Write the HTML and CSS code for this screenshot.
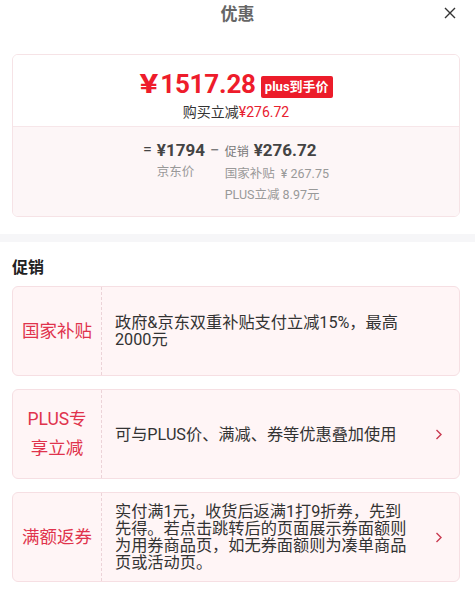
FILE: index.html
```html
<!DOCTYPE html>
<html lang="zh-CN">
<head>
  <meta charset="UTF-8" />
  <meta name="viewport" content="width=device-width, initial-scale=1.0"/>
  <title>优惠</title>
  <link rel="stylesheet" href="styles.css">
</head>
<body>

  <div class="header">
    <h1>优惠</h1>
    <span class="close">
      <svg width="12" height="12" viewBox="0 0 12 12"><path d="M1 1L11 11M11 1L1 11" stroke="#333" stroke-width="1.4" fill="none"/></svg>
    </span>
  </div>

  <div class="price-card">
    <div class="price-top">
      <div class="price-line">
        <span class="big-price"><span class="yen">¥</span>1517.28</span>
        <span class="badge">plus到手价</span>
      </div>
      <div class="saving">购买立减<span class="red">¥276.72</span></div>
    </div>

    <div class="price-bottom">
      <span class="op">=</span>
      <div class="calc-col">
        <div class="calc-main"><span class="num">¥1794</span></div>
        <div class="calc-sub">京东价</div>
      </div>
      <span class="op minus">−</span>
      <div class="calc-col">
        <div class="calc-main"><span class="tag">促销</span><span class="num">¥276.72</span></div>
        <div class="calc-sub">国家补贴 &nbsp;¥ 267.75</div>
        <div class="calc-sub">PLUS立减 8.97元</div>
      </div>
    </div>
  </div>

  <div class="divider"></div>

  <h2 class="section-title">促销</h2>

  <div class="promo-list">
    <div class="promo">
      <div class="promo-label">国家补贴</div>
      <div class="promo-text">政府&amp;京东双重补贴支付立减15%，最高2000元</div>
      <div class="promo-arrow"></div>
    </div>

    <div class="promo">
      <div class="promo-label">PLUS专享立减</div>
      <div class="promo-text">可与PLUS价、满减、券等优惠叠加使用</div>
      <div class="promo-arrow">
        <svg width="8" height="11" viewBox="0 0 8 11"><path d="M1.5 1L6 5.5L1.5 10" stroke="#c93a50" stroke-width="1.4" fill="none"/></svg>
      </div>
    </div>

    <div class="promo">
      <div class="promo-label">满额返券</div>
      <div class="promo-text">实付满1元，收货后返满1打9折券，先到先得。若点击跳转后的页面展示券面额则为用券商品页，如无券面额则为凑单商品页或活动页。</div>
      <div class="promo-arrow">
        <svg width="8" height="11" viewBox="0 0 8 11"><path d="M1.5 1L6 5.5L1.5 10" stroke="#c93a50" stroke-width="1.4" fill="none"/></svg>
      </div>
    </div>
  </div>

</body>
</html>
```

FILE: styles.css
```css
* { box-sizing: border-box; margin: 0; padding: 0; }
body {
  font-family: 'Roboto', 'Noto Sans CJK SC', sans-serif;
  background: #fff;
  color: #333;
  width: 475px;
}

.header {
  position: relative;
  height: 28px;
  display: flex;
  align-items: center;
  justify-content: center;
}

.header h1 {
  font-size: 17px;
  font-weight: 700;
  color: #666;
  line-height: 26px;
}

.close {
  position: absolute;
  right: 19px;
  top: 7px;
  display: flex;
}

.price-card {
  margin: 26px 15px 0 12px;
  border: 1px solid #f6e3e6;
  border-radius: 6px;
  overflow: hidden;
}

.price-top {
  padding: 12px 0 3px;
  display: flex;
  flex-direction: column;
  align-items: center;
  background: #fff;
}

.price-line {
  display: flex;
  align-items: center;
  height: 34px;
}

.big-price {
  font-size: 26px;
  font-weight: 700;
  color: #ee1c2b;
  letter-spacing: -0.2px;
}

.yen {
  display: inline-block;
  transform: scaleX(1.35);
  margin: 0 4px 0 3px;
}

.badge {
  margin-left: 5px;
  margin-top: 5px;
  background: #ec1c2a;
  color: #fff;
  font-size: 13px;
  font-weight: 700;
  line-height: 22px;
  padding: 0 4px;
  border-radius: 2px;
}

.saving {
  font-size: 14px;
  line-height: 22px;
  color: #333;
}

.red { color: #e8202f; }

.price-bottom {
  background: #fdf6f7;
  border-top: 1px solid #f7e6e9;
  display: flex;
  justify-content: center;
  align-items: flex-start;
  gap: 5px;
  padding: 12px 0 11px;
}

.op {
  font-size: 16px;
  line-height: 22px;
  color: #444;
}

.op.minus {
  color: #777;
  font-size: 17px;
}

.calc-col {
  display: flex;
  flex-direction: column;
}

.calc-main {
  display: flex;
  align-items: baseline;
  line-height: 22px;
}

.num {
  font-size: 17px;
  font-weight: 700;
  color: #444;
}

.tag {
  font-size: 12px;
  color: #777;
  margin-right: 5px;
}

.calc-sub {
  font-size: 12.5px;
  color: #999;
  line-height: 21px;
}

.divider {
  height: 8px;
  background: #f6f6f8;
  margin-top: 17px;
}

.section-title {
  font-size: 16px;
  font-weight: 700;
  color: #222;
  line-height: 20px;
  padding: 16px 12px 8px;
}

.promo-list {
  display: flex;
  flex-direction: column;
  gap: 13px;
  padding: 0 15px 0 12px;
}

.promo {
  display: flex;
  align-items: stretch;
  min-height: 90px;
  background: #fff5f6;
  border: 1px solid #f6dfe3;
  border-radius: 6px;
}

.promo-label {
  flex: none;
  width: 89px;
  border-right: 1px dashed #ecd3d8;
  display: flex;
  align-items: center;
  justify-content: center;
  text-align: center;
  padding: 0 9px;
  font-size: 17.5px;
  line-height: 29px;
  color: #e0334c;
}

.promo-text {
  flex: 1;
  display: flex;
  align-items: center;
  padding: 10px 0 10px 13px;
  font-size: 16.2px;
  line-height: 17px;
  color: #333;
}

.promo-arrow {
  flex: none;
  width: 44px;
  padding-left: 20px;
  display: flex;
  align-items: center;
}
```
